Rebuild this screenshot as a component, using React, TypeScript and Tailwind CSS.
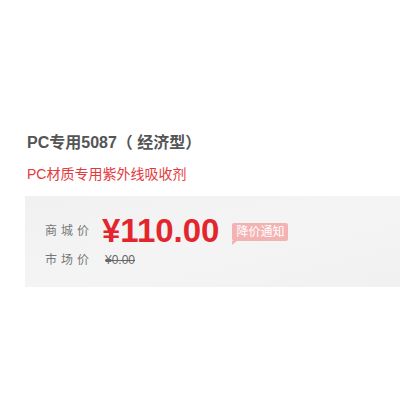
import React from "react";

const font = { fontFamily: '"Liberation Sans", "Noto Sans CJK SC", sans-serif' };

export default function App() {
  return (
    <div className="w-[400px] h-[400px] bg-white pl-[25px] pt-[131px]" style={font}>
      <h1 className="pl-[2px] text-[16px] font-bold leading-[24px] text-[#555]">
        PC专用5087（ 经济型）
      </h1>
      <p className="mt-[9px] pl-[2px] text-[14px] leading-[20px] text-[#e4393c]">
        PC材质专用紫外线吸收剂
      </p>
      <div className="mt-[12px] h-[91px] bg-gradient-to-br from-[#f1f1f1] via-[#f4f4f4] to-[#f1f1f1] pl-[20px] pt-[16px]">
        <div className="flex items-center">
          <span className="w-[57px] text-[12px] tracking-[4px] text-[#777]">商城价</span>
          <span className="text-[33px] font-bold leading-[38px] text-[#e3262d]">¥110.00</span>
          <span className="relative ml-[13px] mt-[2px] rounded-[2px] bg-[#f4b3b3] px-[4px] text-[12px] leading-[18px] text-white">
            降价通知
            <span className="absolute -bottom-[4px] left-0 h-0 w-0 border-r-[5px] border-t-[4px] border-r-transparent border-t-[#f4b3b3]" />
          </span>
        </div>
        <div className="mt-[1px] flex items-center">
          <span className="w-[60px] text-[12px] tracking-[4px] text-[#777]">市场价</span>
          <span className="text-[12px] text-[#666] line-through">¥0.00</span>
        </div>
      </div>
    </div>
  );
}
